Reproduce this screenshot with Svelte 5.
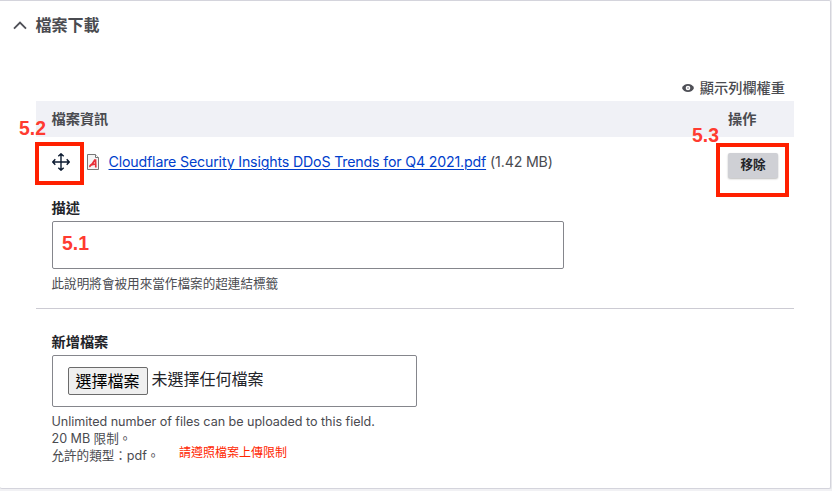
<script>
  const file = {
    name: 'Cloudflare Security Insights DDoS Trends for Q4 2021.pdf',
    size: '1.42 MB'
  };
  let description = $state('');
</script>

<section class="card">
  <header class="title">
    <svg width="14" height="9" viewBox="0 0 14 9"><path d="M1 7.7 7 1.7l6 6" fill="none" stroke="#4f5057" stroke-width="1.9" /></svg>
    <h2>檔案下載</h2>
  </header>

  <div class="content">
    <div class="weights">
      <svg width="12" height="8" viewBox="0 0 12 8"><path d="M6 0C3.2 0 1 1.6 0 4c1 2.4 3.2 4 6 4s5-1.6 6-4C11 1.6 8.800 0 6 0Z" fill="#4f5057" /><circle cx="6" cy="4" r="2.300" fill="#fff" /><circle cx="6" cy="4" r="1" fill="#aaaab0" /></svg>
      <span>顯示列欄權重</span>
    </div>

    <div class="thead">
      <span>檔案資訊</span>
      <span class="operation">操作</span>
      <b class="note n2">5.2</b>
      <b class="note n3">5.3</b>
    </div>

    <div class="row">
      <div class="file">
        <svg class="move" width="18" height="18" viewBox="0 0 18 18"><path d="M9 1v16M1 9h16M6.300 3.300 9 .800l2.700 2.500M6.300 14.700 9 17.200l2.700-2.500M3.300 6.300.800 9l2.500 2.700M14.700 6.300 17.200 9l-2.500 2.700" fill="none" stroke="#0b1a30" stroke-width="1.400" /></svg>
        <svg class="pdf" width="12" height="16" viewBox="0 0 12 16"><path d="M.5.5h8l3 3v12H.5Z" fill="#f5f5f5" stroke="#777" /><path d="M8.500.500v3h3" fill="#fff" stroke="#777" /><path d="M8.500 5.200 8.800 13.500M8.200 5.500C6.800 8 5 10.800 2.300 12.800M3 11.200 8.500 10" fill="none" stroke="#e83038" stroke-width="1.700" /></svg>
        <a href="#file">{file.name}</a><span class="size">({file.size})</span>
      </div>
      <div class="frame drag"></div>
      <div class="frame remove"></div>
      <button class="delete">移除</button>
      <label for="description">描述</label>
      <div class="field">
        <input id="description" bind:value={description} />
        <b class="note n1">5.1</b>
      </div>
      <p class="help">此說明將會被用來當作檔案的超連結標籤</p>
    </div>

    <div class="upload">
      <div class="label">新增檔案</div>
      <div class="picker"><button>選擇檔案</button><span>未選擇任何檔案</span></div>
      <div class="limits">
        <p>Unlimited number of files can be uploaded to this field.</p>
        <p>20 MB 限制。</p>
        <p>允許的類型：pdf。<span class="warning">請遵照檔案上傳限制</span></p>
      </div>
    </div>
  </div>
</section>

<style>
  :global(body) { background: #f1f1f4; overflow: hidden; }
  .card, .card * { box-sizing: border-box; }
  .card {
    width: 831px; height: 489px; background: #fff; color: #4a4b50;
    border: 1px solid #d4d4dc; border-left: 0; border-radius: 0 2px 2px 2px;
    box-shadow: 0 1px 3px #2223301a;
    font-family: Inter, "Noto Sans CJK TC", sans-serif;
  }
  p, h2 { margin: 0; }
  .title { display: flex; align-items: center; height: 48px; padding-left: 13px; gap: 8.500px; }
  .title h2 { font-size: 16px; line-height: 24px; font-weight: 700; }
  .content { width: 758px; margin-left: 36px; padding-top: 28px; }
  .weights { display: flex; justify-content: flex-end; align-items: center; gap: 6px; height: 24px; padding: 0 9px 4px 0; font-size: 14.200px; font-weight: 500; }
  .weights svg { position: relative; top: 1px; }
  .thead { position: relative; display: flex; align-items: center; height: 36px; padding: 0 0 2px 15.500px; background: #f0f1f6; font-size: 14.200px; font-weight: 600; }
  .operation { margin-left: auto; width: 66px; }
  .note { position: absolute; font: bold 19.400px/22px "Liberation Sans", sans-serif; color: #ff3b30; }
  .n2 { left: -17px; top: 16px; }
  .n3 { left: 656px; top: 23px; }
  .n1 { left: 10px; top: 11px; }
  .row { position: relative; height: 172px; border-bottom: 1px solid #cccbd3; padding-left: 15.500px; }
  .file { display: flex; align-items: center; height: 50px; font-size: 14.200px; line-height: 20px; }
  .pdf { margin: 0 9.500px 0 17.500px; }
  a { color: #003ecc; text-decoration: underline; text-underline-offset: 2px; text-decoration-thickness: 1px; white-space: nowrap; letter-spacing: -0.170px; }
  .size { margin-left: 4px; letter-spacing: -0.170px; }
  .frame { position: absolute; border: 4px solid #ff2000; }
  .drag { left: -1px; top: 5px; width: 49px; height: 43px; }
  .remove { left: 680px; top: 6px; width: 73px; height: 54px; }
  .delete { position: absolute; left: 692px; top: 16px; width: 50px; height: 25px; padding: 0 0 3px; border: 0; border-radius: 2px; background: #cfd0d5; box-shadow: 0 1px 2px #0004; color: #232429; font: bold 12.600px/22px "Noto Sans CJK TC", sans-serif; }
  label, .label { display: block; font-size: 14.200px; line-height: 20px; font-weight: 700; color: #232429; }
  label { margin-top: 11px; }
  .field { position: relative; width: 512px; height: 48px; margin: 3px 0 0 .500px; }
  input { display: block; width: 100%; height: 100%; border: 1px solid #85868c; border-radius: 2px; outline: 0; padding: 0 15px; font-size: 16px; }
  .help { margin-top: 5px; font-size: 12.600px; line-height: 20px; }
  .upload { padding: 23px 0 0 15.500px; }
  .picker { display: flex; align-items: center; width: 365px; height: 52px; margin: 3px 0 0 .500px; padding-left: 15px; border: 1px solid #85868c; border-radius: 2px; gap: 3.500px; font-size: 16px; color: #232429; }
  .picker button { width: 80px; height: 28px; padding: 0 1px 2px 0; border: 1px solid #6b6b6b; border-radius: 2px; background: #efefef; color: #000; font: 16px/24px "Noto Sans CJK TC", sans-serif; }
  .picker span { line-height: 24px; margin-top: -5px; }
  .limits { margin-top: 6px; font-size: 12.600px; line-height: 17px; }
  .limits p { height: 17px; white-space: nowrap; letter-spacing: -0.040px; }
  .limits .warning { position: absolute; left: 179px; top: 444px; font-size: 12px; line-height: 17px; color: #ff2600; letter-spacing: 0; }
</style>
